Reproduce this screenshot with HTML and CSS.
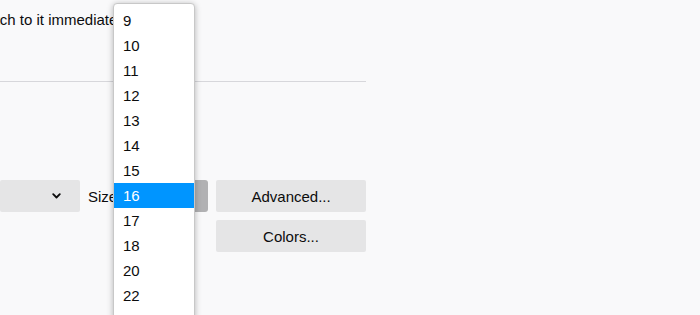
FILE: index.html
```html
<!DOCTYPE html>
<html>
<head>
<meta charset="utf-8">
<link rel="stylesheet" href="styles.css">
</head>
<body>
<div class="content">
  <p class="intro">switch to it immediately</p>
  <div class="rule"></div>
  <div class="font-row">
    <div class="select font-select">
      <svg class="chev" width="9" height="6" viewBox="0 0 9 6"><path d="M1.2 1.2 L4.5 4.5 L7.8 1.2" fill="none" stroke="#0c0c0d" stroke-width="1.8" stroke-linecap="round" stroke-linejoin="round"/></svg>
    </div>
    <span class="label">Size</span>
    <div class="select size-select open"></div>
    <button class="btn">Advanced...</button>
  </div>
  <div class="colors-row">
    <button class="btn">Colors...</button>
  </div>
</div>
<ul class="popup">
  <li>9</li>
  <li>10</li>
  <li>11</li>
  <li>12</li>
  <li>13</li>
  <li>14</li>
  <li>15</li>
  <li class="selected">16</li>
  <li>17</li>
  <li>18</li>
  <li>20</li>
  <li>22</li>
</ul>
</body>
</html>
```
FILE: styles.css
```css
html, body {
  margin: 0;
  padding: 0;
  height: 100%;
  overflow: hidden;
}
body {
  background: #f9f9fa;
  font-family: "Liberation Sans", Arial, sans-serif;
  font-size: 15px;
  color: #0c0c0d;
}
.content {
  width: 366px;
}
.intro {
  margin: 0 0 0 -26px;
  padding-top: 10px;
  line-height: 20px;
  white-space: nowrap;
}
.rule {
  margin-top: 51px;
  height: 1px;
  background: #d7d7db;
}
.font-row {
  margin-top: 98px;
  display: flex;
  align-items: center;
  height: 32px;
}
.select {
  height: 32px;
  border-radius: 2px;
  background: #e5e5e6;
  box-sizing: border-box;
}
.font-select {
  width: 80px;
  display: flex;
  align-items: center;
  justify-content: flex-end;
  padding-right: 19px;
}
.chev {
  display: block;
}
.label {
  margin-left: 8px;
}
.size-select {
  margin-left: 6px;
  width: 85px;
}
.size-select.open {
  background: #b1b1b3;
  border-radius: 3px;
}
.btn {
  margin-left: 8px;
  width: 150px;
  height: 32px;
  border: none;
  border-radius: 2px;
  background: #e5e5e6;
  font-family: inherit;
  font-size: 15px;
  color: #0c0c0d;
  padding: 0;
}
.colors-row {
  margin-top: 8px;
  display: flex;
  justify-content: flex-end;
}
.popup {
  position: absolute;
  left: 113px;
  top: 3px;
  width: 80px;
  margin: 0;
  padding: 4px 0 12px;
  list-style: none;
  background: #ffffff;
  border: 1px solid #c8c8c8;
  border-radius: 4px;
  box-shadow: 0 1px 6px rgba(0, 0, 0, 0.28);
}
.popup li {
  height: 25px;
  line-height: 25px;
  padding-left: 9px;
  color: #0c0c0d;
}
.popup li.selected {
  background: #0095ff;
  color: #ffffff;
}
```
